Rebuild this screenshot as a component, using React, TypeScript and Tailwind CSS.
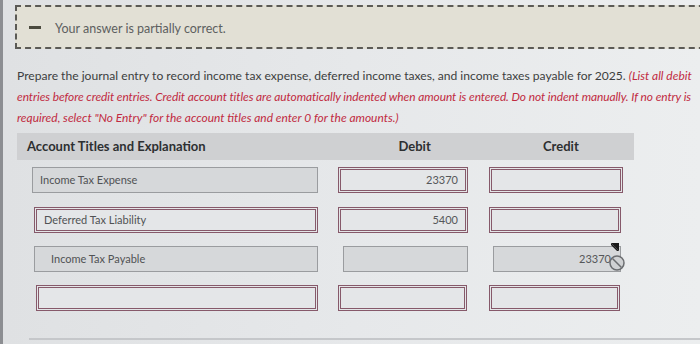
import React from "react";

const maroon = "border-[3px] border-double border-[#86596a] bg-[#e4e6e8]";
const grey = "border border-[#9a9c9f] bg-[#d6d8da]";

function Box({ cls, w, ml, text, right, children }: { cls: string; w: number; ml: number; text?: string; right?: boolean; children?: React.ReactNode }) {
  return (
    <div
      className={`relative h-[26px] flex items-center ${cls} ${right ? "justify-end pr-[7px]" : ""}`}
      style={{ width: w, marginLeft: ml }}
    >
      {text && <span className="text-[11px] text-[#555759]">{text}</span>}
      {children}
    </div>
  );
}

export default function App() {
  return (
    <div
      className="w-[700px] h-[344px] overflow-hidden bg-gradient-to-r from-[#dfe1e3] via-[#e6e8ea] to-[#eceeef] border-l-[3px] border-[#8c8e92] relative"
      style={{ fontFamily: "Lato, 'Open Sans', sans-serif" }}
    >
      {/* banner */}
      <div className="ml-[12px] mt-[5px] w-[720px] h-[44px] border-2 border-dashed border-[#5b5a55] bg-[#e2e0d5] flex items-center">
        <div className="ml-[12px] w-[12px] h-[3px] bg-[#4b4a3e]" />
        <span className="ml-[14px] pt-[5px] text-[12.5px] text-[#5d5f60]">Your answer is partially correct.</span>
      </div>

      {/* paragraph */}
      <div className="ml-[14px] mt-[16px] text-[12.1px] leading-[21px] text-[#3c3e40] whitespace-nowrap">
        <div>
          Prepare the journal entry to record income tax expense, deferred income taxes, and income taxes payable for 2025.{" "}
          <i className="text-[#c12a41] text-[11.95px]">(List all debit</i>
        </div>
        <div className="italic text-[#c12a41] text-[11.95px] tracking-[-0.08px]">
          entries before credit entries. Credit account titles are automatically indented when amount is entered. Do not indent manually. If no entry is
        </div>
        <div className="italic text-[#c12a41] text-[11.95px]">required, select "No Entry" for the account titles and enter 0 for the amounts.)</div>
      </div>

      {/* header */}
      <div className="ml-[14px] mt-[5px] w-[617px] h-[27px] bg-[#cfd0d2] flex items-center text-[13px] font-bold text-[#2d2f31]">
        <span className="ml-[10px] w-[300px]">Account Titles and Explanation</span>
        <span className="w-[150px] text-center ml-[22px]">Debit</span>
        <span className="w-[150px] text-center">Credit</span>
      </div>

      {/* rows */}
      <div className="flex flex-col gap-[14px] mt-[7px]">
        <div className="flex">
          <Box cls={grey} w={286} ml={29}>
            <span className="ml-[7px] text-[11px] text-[#505254]">Income Tax Expense</span>
          </Box>
          <Box cls={maroon} w={130} ml={20} right text="23370" />
          <Box cls={maroon} w={134} ml={21} />
        </div>
        <div className="flex">
          <Box cls={maroon} w={284} ml={31}>
            <span className="ml-[7px] text-[11px] text-[#505254]">Deferred Tax Liability</span>
          </Box>
          <Box cls={maroon} w={130} ml={20} right text="5400" />
          <Box cls={maroon} w={132} ml={21} />
        </div>
        <div className="flex -mt-[1px]">
          <Box cls={grey} w={284} ml={31}>
            <span className="ml-[16px] text-[11px] text-[#505254]">Income Tax Payable</span>
          </Box>
          <Box cls={grey} w={125} ml={25} />
          <Box cls={grey} w={128} ml={25} right>
            <span className="text-[11px] text-[#555759] mr-[2px]">23370</span>
            <svg className="absolute -right-[10px] top-[-6px]" width="22" height="34" viewBox="0 0 22 34">
              <polygon points="3,2 11,2 11,10" fill="#1a1a1a" />
              <polygon points="3,2 3,4 9,10 11,10" fill="#1a1a1a" />
              <circle cx="9" cy="22" r="7" fill="#cfd1d3" stroke="#6b6d70" strokeWidth="1.5" />
              <line x1="4.5" y1="17.5" x2="13.5" y2="26.5" stroke="#6b6d70" strokeWidth="1.5" />
            </svg>
          </Box>
        </div>
        <div className="flex -mt-[1px]">
          <Box cls={maroon} w={282} ml={33} />
          <Box cls={maroon} w={129} ml={20} />
          <Box cls={maroon} w={131} ml={22} />
        </div>
      </div>

      <div className="absolute left-[26px] right-0 top-[338px] h-[2px] bg-[#c5c7ca]" />
    </div>
  );
}
